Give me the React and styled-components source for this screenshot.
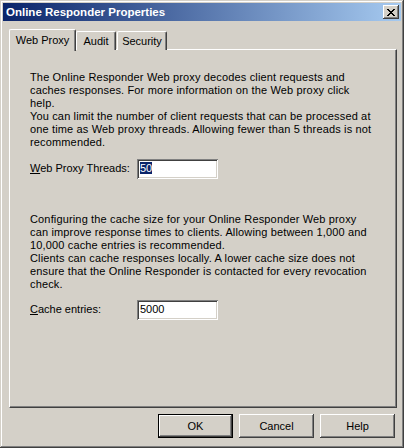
import React from "react";
import styled, { createGlobalStyle } from "styled-components";

const GlobalStyle = createGlobalStyle`
  html, body {
    margin: 0;
    padding: 0;
    background: #d4d0c8;
  }
  * {
    box-sizing: border-box;
  }
`;

const Window = styled.div`
  width: 404px;
  height: 448px;
  display: flex;
  flex-direction: column;
  padding: 3px;
  background: #d4d0c8;
  font-family: "Liberation Sans", Arial, sans-serif;
  font-size: 11px;
  color: #000;
  box-shadow: inset -1px -1px 0 #404040, inset 1px 1px 0 #d4d0c8,
    inset -2px -2px 0 #808080, inset 2px 2px 0 #ffffff;
`;

const TitleBar = styled.div`
  height: 18px;
  display: flex;
  align-items: center;
  justify-content: space-between;
  padding: 0 2px 0 3px;
  background: linear-gradient(to right, #0a246a, #a6caf0);
`;

const Title = styled.span`
  color: #fff;
  font-weight: bold;
  font-size: 11.5px;
`;

const CloseButton = styled.div`
  width: 16px;
  height: 14px;
  display: flex;
  align-items: center;
  justify-content: center;
  background: #d4d0c8;
  box-shadow: inset -1px -1px 0 #404040, inset 1px 1px 0 #ffffff,
    inset -2px -2px 0 #808080;
`;

const Body = styled.div`
  flex: 1;
  display: flex;
  flex-direction: column;
  padding: 7px 4px 0 6px;
`;

const TabStrip = styled.div`
  display: flex;
  align-items: flex-end;
  height: 22px;
  position: relative;
  z-index: 1;
`;

const Tab = styled.div`
  height: ${(p) => (p.active ? "22px" : "19px")};
  width: ${(p) => p.w}px;
  margin: ${(p) => (p.active ? "0 0 -1px 0" : "0 1px 0 0")};
  padding-top: ${(p) => (p.active ? "4px" : "3px")};
  display: flex;
  justify-content: center;
  align-items: flex-start;
  background: #d4d0c8;
  border-top: 1px solid #fff;
  border-left: 1px solid #fff;
  border-right: 1px solid #404040;
  border-top-left-radius: 2px;
  border-top-right-radius: 2px;
  box-shadow: inset -1px 0 0 #808080;
  line-height: 13px;
`;

const Panel = styled.div`
  height: 359px;
  margin-top: -1px;
  padding: 21px 12px 0 20px;
  border-top: 1px solid #fff;
  border-left: 1px solid #fff;
  border-right: 1px solid #404040;
  border-bottom: 1px solid #404040;
  box-shadow: inset -1px -1px 0 #808080;
`;

const Paragraph = styled.div`
  margin-top: ${(p) => p.top || 0}px;
  line-height: 13px;
  white-space: nowrap;
  letter-spacing: 0.15px;
`;

const FieldRow = styled.div`
  display: flex;
  align-items: center;
  margin-top: ${(p) => p.top}px;
`;

const Label = styled.span`
  width: 107px;
  padding-bottom: 2px;
`;

const Key = styled.span`
  text-decoration: underline;
`;

const Input = styled.div`
  width: 81px;
  height: 20px;
  padding: 3px 0 0 3px;
  background: #fff;
  line-height: 13px;
  box-shadow: inset 1px 1px 0 #808080, inset -1px -1px 0 #ffffff,
    inset 2px 2px 0 #404040, inset -2px -2px 0 #d4d0c8;
`;

const Selected = styled.span`
  background: #0a246a;
  color: #fff;
`;

const ButtonRow = styled.div`
  display: flex;
  justify-content: flex-end;
  gap: 6px;
  margin-top: 6px;
  padding-right: 2px;
`;

const Button = styled.div`
  width: 75px;
  height: 24px;
  display: flex;
  align-items: center;
  justify-content: center;
  background: #d4d0c8;
  box-shadow: ${(p) =>
    p.primary
      ? "inset -1px -1px 0 #000, inset 1px 1px 0 #000, inset -2px -2px 0 #404040, inset 2px 2px 0 #fff, inset -3px -3px 0 #808080"
      : "inset -1px -1px 0 #404040, inset 1px 1px 0 #fff, inset -2px -2px 0 #808080"};
`;

const proxyText = [
  "The Online Responder Web proxy decodes client requests and",
  "caches responses. For more information on the Web proxy click",
  "help.",
  "You can limit the number of client requests that can be processed at",
  "one time as Web proxy threads. Allowing fewer than 5 threads is not",
  "recommended.",
];

const cacheText = [
  "Configuring the cache size for your Online Responder Web proxy",
  "can improve response times to clients. Allowing between 1,000 and",
  "10,000 cache entries is recommended.",
  "Clients can cache responses locally. A lower cache size does not",
  "ensure that the Online Responder is contacted for every revocation",
  "check.",
];

function Lines({ lines, top }) {
  return (
    <Paragraph top={top}>
      {lines.map((l) => (
        <div key={l}>{l}</div>
      ))}
    </Paragraph>
  );
}

export default function App() {
  return (
    <>
      <GlobalStyle />
      <Window>
        <TitleBar>
          <Title>Online Responder Properties</Title>
          <CloseButton>
            <svg width="8" height="7" viewBox="0 0 8 7">
              <path
                d="M0 0h2v1h1v1h2V1h1V0h2v1H7v1H6v1H5v1h1v1h1v1h1v1H6V6H5V5H3v1H2v1H0V6h1V5h1V4h1V3H2V2H1V1H0z"
                fill="#000"
              />
            </svg>
          </CloseButton>
        </TitleBar>
        <Body>
          <TabStrip>
            <Tab active w={67}>Web Proxy</Tab>
            <Tab w={40}>Audit</Tab>
            <Tab w={50}>Security</Tab>
          </TabStrip>
          <Panel>
            <Lines lines={proxyText} />
            <FieldRow top={10}>
              <Label>
                <Key>W</Key>eb Proxy Threads:
              </Label>
              <Input>
                <Selected>50</Selected>
              </Input>
            </FieldRow>
            <Lines lines={cacheText} top={34} />
            <FieldRow top={9}>
              <Label>
                <Key>C</Key>ache entries:
              </Label>
              <Input>5000</Input>
            </FieldRow>
          </Panel>
          <ButtonRow>
            <Button primary>OK</Button>
            <Button>Cancel</Button>
            <Button>Help</Button>
          </ButtonRow>
        </Body>
      </Window>
    </>
  );
}
